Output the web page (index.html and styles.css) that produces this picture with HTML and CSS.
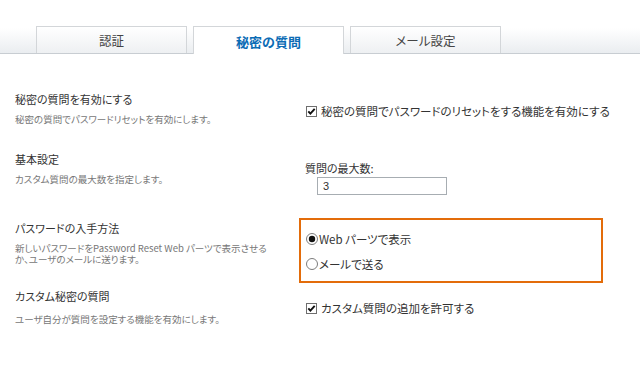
FILE: index.html
```html
<!DOCTYPE html>
<html lang="ja">
<head>
<meta charset="utf-8">
<title>秘密の質問</title>
<link rel="stylesheet" href="styles.css">
</head>
<body>
<div class="tabbar">
  <div class="tab">認証</div>
  <div class="tab active">秘密の質問</div>
  <div class="tab">メール設定</div>
</div>
<div class="form">
  <section class="sec s1">
    <div class="left">
      <div class="title">秘密の質問を有効にする</div>
      <div class="desc">秘密の質問でパスワードリセットを有効にします。</div>
    </div>
    <div class="right">
      <label class="check"><span class="box"><svg width="11" height="11" viewBox="0 0 11 11"><rect x="0.5" y="0.5" width="10" height="10" fill="#fff" stroke="#6e6e6e"/><path d="M2.3 5.3 L4.4 7.6 L8.7 2.8" fill="none" stroke="#111" stroke-width="1.9"/></svg></span>秘密の質問でパスワードのリセットをする機能を有効にする</label>
    </div>
  </section>
  <section class="sec s2">
    <div class="left">
      <div class="title">基本設定</div>
      <div class="desc">カスタム質問の最大数を指定します。</div>
    </div>
    <div class="right">
      <div class="field-label">質問の最大数:</div>
      <div class="input">3</div>
    </div>
  </section>
  <section class="sec s3">
    <div class="left">
      <div class="title">パスワードの入手方法</div>
      <div class="desc">新しいパスワードをPassword Reset Web パーツで表示させる<br>か、ユーザのメールに送ります。</div>
    </div>
    <div class="right">
      <div class="choices">
        <label class="radio"><svg width="12" height="12" viewBox="0 0 12 12"><circle cx="6" cy="6" r="5.5" fill="#fff" stroke="#7c7c7c"/><circle cx="6" cy="6" r="3.2" fill="#111"/></svg>Web パーツで表示</label>
        <label class="radio"><svg width="12" height="12" viewBox="0 0 12 12"><circle cx="6" cy="6" r="5.5" fill="#fff" stroke="#7c7c7c"/></svg>メールで送る</label>
      </div>
    </div>
  </section>
  <section class="sec s4">
    <div class="left">
      <div class="title">カスタム秘密の質問</div>
      <div class="desc">ユーザ自分が質問を設定する機能を有効にします。</div>
    </div>
    <div class="right">
      <label class="check"><span class="box"><svg width="11" height="11" viewBox="0 0 11 11"><rect x="0.5" y="0.5" width="10" height="10" fill="#fff" stroke="#6e6e6e"/><path d="M2.3 5.3 L4.4 7.6 L8.7 2.8" fill="none" stroke="#111" stroke-width="1.9"/></svg></span>カスタム質問の追加を許可する</label>
    </div>
  </section>
</div>
</body>
</html>
```
FILE: styles.css
```css
html, body {
  margin: 0;
  background: #fff;
}
body {
  font-family: "Noto Sans CJK JP", "Noto Sans", sans-serif;
  font-feature-settings: "palt";
  color: #333;
}
.tabbar {
  display: flex;
  gap: 6px;
  padding: 26px 0 0 36px;
  height: 27px;
  background: linear-gradient(#fff 0, #fff 28px, #eaedf0 53px);
  border-bottom: 1px solid #c8cdd2;
}
.tab {
  width: 149px;
  height: 25px;
  padding-top: 1px;
  border: 1px solid #d3d6d9;
  border-bottom: 0;
  background: linear-gradient(#fff, #eef0f2);
  display: flex;
  align-items: center;
  justify-content: center;
  font-size: 12.5px;
  color: #444;
}
.tab.active {
  height: 26px;
  background: #fff;
  color: #0b6cb5;
  font-weight: bold;
  font-size: 13px;
}
.form {
  padding: 38px 0 0 15px;
}
.sec {
  display: grid;
  grid-template-columns: 284px 1fr;
  align-items: start;
}
.title {
  font-size: 11px;
  line-height: 14px;
  color: #333;
}
.desc {
  font-size: 9.5px;
  line-height: 11px;
  color: #777;
  margin-top: 8px;
}
.s1 .right { padding: 12px 0 0 7px; }
.s2 { margin-top: 27px; }
.s2 .right { padding: 9px 0 0 6px; }
.s3 { margin-top: 23px; }
.s3 .left { padding-top: 3px; }
.s4 { margin-top: 6px; }
.s4 .right { padding: 12px 0 0 7px; }
.s4 .desc { margin-top: 11px; }
.check {
  display: flex;
  align-items: center;
  font-size: 11.5px;
  line-height: 14px;
  white-space: nowrap;
  color: #333;
}
.box {
  display: flex;
  margin-right: 4px;
}
.field-label {
  font-size: 11px;
  line-height: 14px;
  color: #333;
}
.input {
  box-sizing: border-box;
  width: 130px;
  height: 18px;
  margin: 2px 0 0 12px;
  border: 1px solid #a7adb2;
  padding-left: 5px;
  font-family: "Liberation Sans", sans-serif;
  font-size: 11px;
  line-height: 16px;
  color: #333;
}
.choices {
  box-sizing: border-box;
  width: 304px;
  height: 65px;
  border: 2px solid #e36c0a;
  padding: 6px 0 0 5px;
}
.radio {
  display: flex;
  align-items: center;
  height: 25px;
  font-size: 11.5px;
  white-space: nowrap;
  color: #333;
}
.radio svg {
  margin-right: 1px;
}
```
